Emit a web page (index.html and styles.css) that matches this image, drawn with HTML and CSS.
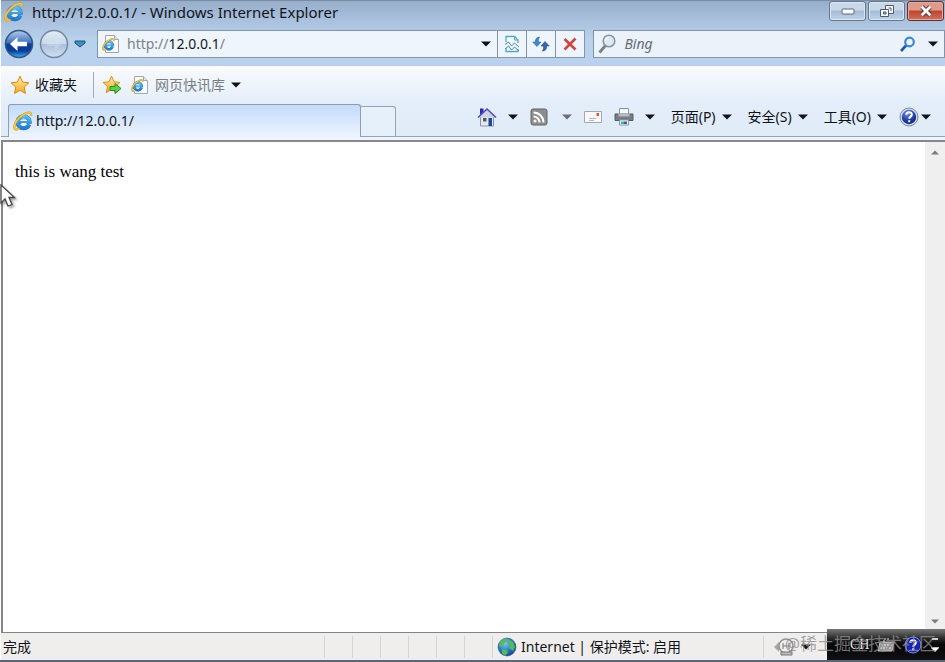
FILE: index.html
```html
<!DOCTYPE html>
<html lang="zh-CN">
<head>
<meta charset="utf-8">
<title>http://12.0.0.1/ - Windows Internet Explorer</title>
<link rel="stylesheet" href="styles.css">
</head>
<body>
<svg class="defs" aria-hidden="true">
  <defs>
    <linearGradient id="g-blue" x1="0" y1="0" x2="0" y2="1"><stop offset="0" stop-color="#55bdf3"/><stop offset="1" stop-color="#1f7bd2"/></linearGradient>
    <linearGradient id="g-star" x1="0" y1="0" x2="0" y2="1"><stop offset="0" stop-color="#fff2a0"/><stop offset="1" stop-color="#f9a51c"/></linearGradient>
    <linearGradient id="g-back" x1="0" y1="0" x2="0" y2="1"><stop offset="0" stop-color="#b4cdee"/><stop offset=".45" stop-color="#3f73bd"/><stop offset=".5" stop-color="#0d3f97"/><stop offset=".75" stop-color="#0b3b9c"/><stop offset="1" stop-color="#35b5f2"/></linearGradient>
    <linearGradient id="g-fwd" x1="0" y1="0" x2="0" y2="1"><stop offset="0" stop-color="#e3ecf6"/><stop offset=".48" stop-color="#cbd9e9"/><stop offset=".52" stop-color="#aabfd8"/><stop offset="1" stop-color="#d3e2f2"/></linearGradient>
    <radialGradient id="g-globe" cx=".4" cy=".3" r=".8"><stop offset="0" stop-color="#83c8f5"/><stop offset=".6" stop-color="#216bc2"/><stop offset="1" stop-color="#123a7b"/></radialGradient>
    <radialGradient id="g-help" cx=".4" cy=".25" r=".8"><stop offset="0" stop-color="#7593e0"/><stop offset=".6" stop-color="#1f40ae"/><stop offset="1" stop-color="#10206f"/></radialGradient>
  </defs>
  <symbol id="ie" viewBox="0 0 20 20">
    <circle cx="10.500" cy="10.500" r="4.500" fill="#e8f3fc"/>
    <path d="M16.200 13.500A6 6 0 1 1 16.600 10.800H6.500" fill="none" stroke="#2a6fb5" stroke-width="4"/>
    <path d="M16.200 13.500A6 6 0 1 1 16.600 10.800H6.500" fill="none" stroke="url(#g-blue)" stroke-width="3.400"/>
    <path d="M7.500 9.500h6.500M8.500 12.500h5" stroke="#e8f3fc" stroke-width="1.100"/>
    <path d="M18 4.500C18.500.8 15 1 11 3.200 5.500 6.300.8 12.500 1.300 16.500c.3 2.400 2.700 2.300 5 .8" fill="none" stroke="#c48a1c" stroke-width="2.200"/>
    <path d="M18 4.500C18.500.8 15 1 11 3.200 5.500 6.300.8 12.500 1.300 16.500c.3 2.400 2.700 2.300 5 .8" fill="none" stroke="#f9c936" stroke-width="1.600"/>
  </symbol>
  <symbol id="page-ie" viewBox="0 0 18 20">
    <path d="M3.500 1.500h9l4 4v13h-13z" fill="#fbfcfe" stroke="#a3a8b0"/>
    <path d="M12.500 1.500v4h4" fill="#e3e6eb" stroke="#a3a8b0"/>
    <use href="#ie" x="0" y="4" width="13" height="13"/>
  </symbol>
  <symbol id="down" viewBox="0 0 10 6"><path d="M0 .5h10L5 5.500z" fill="currentColor"/></symbol>
  <symbol id="star" viewBox="0 0 20 20"><path d="M10 1.200l2.600 5.900 6.300.7-4.700 4.300 1.300 6.400L10 15.300l-5.500 3.200 1.300-6.400L1.100 7.800l6.300-.7z" fill="url(#g-star)" stroke="#d98a1f" stroke-linejoin="round"/></symbol>
  <symbol id="help" viewBox="0 0 20 20"><circle cx="10" cy="10" r="9" fill="#d5dbe8" stroke="#7d8796"/><circle cx="10" cy="10" r="7.200" fill="url(#g-help)"/><path d="M7.300 7.800c0-3.600 5.600-3.400 5.600-.2 0 2-2.700 2-2.700 4.200M10.200 13.300v2" fill="none" stroke="#fff" stroke-width="2"/></symbol>
</svg>

<div class="window">
  <header class="frame">
    <div class="titlebar">
      <svg class="i20"><use href="#ie"/></svg>
      <h1>http://12.0.0.1/ - Windows Internet Explorer</h1>
      <div class="controls">
        <button class="ctl" aria-label="最小化"><svg width="14" height="8" viewBox="0 0 14 8"><rect x="1" y="2" width="12" height="5" rx="1" fill="#fff" stroke="#58677c"/></svg></button>
        <button class="ctl" aria-label="还原"><svg width="16" height="14" viewBox="0 0 16 14"><path d="M6.500 1.500h8v8h-8z" fill="#f4f7fb" stroke="#4f5d70"/><path d="M9.500 4h2.500v3" fill="none" stroke="#4f5d70"/><path d="M1.500 5.500h8v7h-8z" fill="#f4f7fb" stroke="#4f5d70"/><path d="M4.500 8h2.500v2H4.500z" fill="#a8bdd5" stroke="#4f5d70"/></svg></button>
        <button class="ctl close" aria-label="关闭"><svg width="14" height="12" viewBox="0 0 14 12"><path d="M3 2l8 8M11 2l-8 8" stroke="#5b3337" stroke-width="4.600"/><path d="M2.700 1.700l8.600 8.600M11.300 1.700l-8.600 8.600" stroke="#fff" stroke-width="2.800"/></svg></button>
      </div>
    </div>
    <div class="navbar">
      <div class="travel">
        <button aria-label="后退"><svg width="30" height="30" viewBox="0 0 30 30"><circle cx="15" cy="15" r="13.500" fill="url(#g-back)" stroke="#36547f" stroke-width="1.500"/><path d="M6 15l7.500-7v4.800H23v4.400h-9.500V22z" fill="#fff"/></svg></button>
        <button aria-label="前进"><svg width="30" height="30" viewBox="0 0 30 30"><circle cx="15" cy="15" r="13.500" fill="url(#g-fwd)" stroke="#7387a1" stroke-width="1.500"/><path d="M8 13h8V9l7 6-7 6v-4H8z" fill="#dce7f3" opacity=".35"/></svg></button>
        <button aria-label="最近的页面"><svg width="12" height="8" viewBox="0 0 12 8"><path d="M1 1h10v2L6 7 1 3z" fill="#3f8fc6" stroke="#1f4e7d"/></svg></button>
      </div>
      <div class="address">
        <div class="field">
          <svg class="page"><use href="#page-ie"/></svg>
          <div class="url" role="textbox" aria-label="地址" contenteditable="true" spellcheck="false">http://<b>12.0.0.1</b>/</div>
          <button aria-label="显示地址列表"><svg class="arrow"><use href="#down"/></svg></button>
        </div>
        <button class="cell" aria-label="兼容性视图"><svg width="16" height="18" viewBox="0 0 16 18"><path d="M2 7V1.500h8.500L14 5v3M2 13v3.500h12V14" fill="#f4fbff" stroke="#4dabc9" stroke-width="1.300"/><path d="M10.500 1.500V5H14" fill="none" stroke="#4dabc9"/><path d="M1 9.500l3.500-2.500 3 4 3-3L15 12M1 14l3.500-3 3 4 3-3 4.500 4" fill="none" stroke="#4a87c3" stroke-width="1"/></svg></button>
        <button class="cell" aria-label="刷新"><svg width="18" height="16" viewBox="0 0 18 16"><path d="M7.500 1C4.500 1 3.300 3 3.400 6H.8L5 10.500 9 6H6.500c-.2-2 0-3 1-5z" fill="#4187d2" stroke="#2b67ae" stroke-width=".6"/><path d="M10.500 15c3 0 4.200-2 4.100-5h2.600L13 5.500 9 10h2.500c.2 2 0 3-1 5z" fill="#3467b2" stroke="#214a91" stroke-width=".6"/></svg></button>
        <button class="cell" aria-label="停止"><svg width="14" height="14" viewBox="0 0 14 14"><path d="M1.500 2l11 10.500M12.500 1.500L1.500 12.500" stroke="#cf443e" stroke-width="2.600"/></svg></button>
      </div>
      <form class="search">
        <svg width="18" height="20" viewBox="0 0 18 20"><path d="M1.500 18.500l6-7" stroke="#777f89" stroke-width="2.800"/><circle cx="11" cy="7" r="5.800" fill="#d9e9f8" stroke="#8b95a3" stroke-width="1.600"/><path d="M7.500 6.500c.3-2 1.500-3 3.500-3" fill="none" stroke="#fff" stroke-width="1.500"/></svg>
        <input type="text" aria-label="搜索" placeholder="Bing">
        <button type="button" aria-label="搜索"><svg width="16" height="16" viewBox="0 0 16 16"><path d="M1 15l5.500-6" stroke="#2457a5" stroke-width="2.600"/><circle cx="9.500" cy="6" r="4.300" fill="#eaf4ff" stroke="#3c86d8" stroke-width="2.200"/></svg></button>
        <button type="button" aria-label="搜索选项"><svg class="arrow"><use href="#down"/></svg></button>
      </form>
    </div>
  </header>

  <div class="bars">
    <nav class="favorites" aria-label="收藏夹栏">
      <button class="fav"><svg class="i20"><use href="#star"/></svg>收藏夹</button>
      <button aria-label="添加到收藏夹栏" class="addfav"><svg width="20" height="20" viewBox="0 0 20 20"><use href="#star" width="19" height="19"/><path d="M8 11.500h5V8.500l6 5-6 5v-3H8z" fill="#5fcf45" stroke="#2a8b25"/></svg></button>
      <button class="slices"><svg class="page"><use href="#page-ie"/></svg><span>网页快讯库</span><svg class="arrow"><use href="#down"/></svg></button>
    </nav>
    <div class="tabrow">
      <button class="tab"><svg class="i20"><use href="#ie"/></svg>http://12.0.0.1/</button>
      <button class="newtab" aria-label="新选项卡"></button>
      <div class="commands">
        <button aria-label="主页"><svg class="i20" viewBox="0 0 20 20"><path d="M3.500 9h13v10h-13z" fill="#e7eaf0" stroke="#8c94a2"/><path d="M3 1.500h3.500V5L3 8z" fill="#2a2bb6"/><path d="M1 10.500l9-8.500 9 8.500" fill="#cfd3df" stroke="#4a4cc4" stroke-width="1.600"/><path d="M6 11h3.500v3.500H6z" fill="#535a61"/><path d="M11.500 11H15v8h-3.500z" fill="#1b4a9a"/></svg><svg class="arrow"><use href="#down"/></svg></button>
        <button aria-label="源" class="feed"><svg width="18" height="18" viewBox="0 0 18 18"><rect x="1" y="1" width="16" height="16" rx="2" fill="#8d8d8d" stroke="#676767"/><circle cx="5" cy="13" r="1.600" fill="#fff"/><path d="M3.500 8.500a6 6 0 0 1 6 6M3.500 4.500a10 10 0 0 1 10 10" fill="none" stroke="#fff" stroke-width="2"/></svg><svg class="arrow"><use href="#down"/></svg></button>
        <button aria-label="阅读邮件"><svg width="18" height="14" viewBox="0 0 18 14"><path d="M.5 1.500h17v11H.5z" fill="#fbf9f8" stroke="#a5a5ad"/><path d="M12.500 3H15v3h-2.500z" fill="#dc5642"/><path d="M5 8.500h7M5 10.500h5" stroke="#b9b9bd"/></svg></button>
        <button aria-label="打印"><svg class="i20" viewBox="0 0 20 20"><path d="M5.500 1.500h9v7h-9z" fill="#f8f9fb" stroke="#8b929d"/><path d="M1 7h18v6.500H1z" fill="#777c83" stroke="#565b62"/><path d="M4.500 6.500h11v3h-11z" fill="#b6bbc1"/><path d="M5.500 13h9v5h-9z" fill="#fff" stroke="#8b929d"/><path d="M7 14.500h3V17H7z" fill="#2ab5c4"/><path d="M10 14.500h3V17h-3z" fill="#345fa6"/></svg><svg class="arrow"><use href="#down"/></svg></button>
        <button class="menu">页面(P)<svg class="arrow"><use href="#down"/></svg></button>
        <button class="menu">安全(S)<svg class="arrow"><use href="#down"/></svg></button>
        <button class="menu">工具(O)<svg class="arrow"><use href="#down"/></svg></button>
        <button aria-label="帮助" class="helpbtn"><svg class="i20"><use href="#help"/></svg><svg class="arrow"><use href="#down"/></svg></button>
      </div>
    </div>
  </div>

  <div class="view">
    <main>this is wang test</main>
    <div class="scrollbar"><svg class="up"><use href="#down"/></svg><svg><use href="#down"/></svg></div>
    <svg class="cursor" width="18" height="26" viewBox="0 0 18 26"><path d="M1 1v18l4-4 3 7 4-1.500-3-7h5.500z" fill="#fff" stroke="#454545" stroke-width="1.300"/></svg>
  </div>

  <footer class="status">
    <span class="done">完成</span>
    <i></i><i></i><i></i><i></i><i></i><i></i>
    <span class="zone"><svg class="i20" viewBox="0 0 20 20"><circle cx="10" cy="10" r="9" fill="url(#g-globe)" stroke="#34577d" stroke-width=".6"/><path d="M3 5c2-3 5-3.500 7-3L9 5 6.500 7 6 10 2 9zM12 3l4 2 2 5-2 4-4-3 1-3-3-2zM5 12l5 1 1 3-3 2.500-3-2z" fill="#4fbd59"/></svg>Internet | 保护模式: 启用</span>
    <span class="extra"><svg width="22" height="20" viewBox="0 0 22 20"><path d="M1 10l5-5v10z" fill="#a9a9a9"/><circle cx="13" cy="9" r="7" fill="#eee" stroke="#929292" stroke-width="1.500"/><path d="M10 6v6M16 6v6M10 9h6M8 15h11v3H8z" fill="#bbb" stroke="#777"/></svg><svg class="arrow"><use href="#down"/></svg></span>
    <div class="langbar">
      <span>CH</span>
      <svg width="18" height="14" viewBox="0 0 18 14"><path d="M3 4h14l-2 9H1z" fill="#999" stroke="#c9c9c9"/><path d="M4 7h11M3 10h11M7 4V1h6" fill="none" stroke="#eee" stroke-dasharray="2 1"/></svg>
      <svg class="i20" viewBox="0 0 20 20"><circle cx="10" cy="10" r="8" fill="#1622b5" stroke="#7b87e6"/><path d="M7.300 7.800c0-3.600 5.600-3.400 5.600-.2 0 2-2.700 2-2.700 4.200M10.200 13.300v2" fill="none" stroke="#fff" stroke-width="2"/></svg>
      <svg width="8" height="16" viewBox="0 0 8 16"><path d="M1 2h6M1 11h6l-3 3z" fill="#fff" stroke="#fff" stroke-width="1.500"/></svg>
    </div>
    <div class="watermark">@稀土掘金技术社区</div>
  </footer>
</div>
</body>
</html>
```

FILE: styles.css
```css
* { box-sizing: border-box; }
body {
  margin: 0;
  color: #10141a;
  font: 14px/20px "Noto Sans", "Noto Sans CJK SC", sans-serif;
}
button, input { margin: 0; padding: 0; border: 0; background: none; color: inherit; font: inherit; }
button { display: flex; align-items: center; }
svg { display: block; flex: none; }
.defs { position: absolute; width: 0; height: 0; }
.i20 { width: 20px; height: 20px; }
.page { width: 18px; height: 20px; }
.arrow { width: 10px; height: 6px; }

.window { display: flex; flex-direction: column; min-height: 100vh; padding-left: 1px; border-bottom: 2px solid #59677d; }
.frame { background: linear-gradient(#97aeca, #a9c1dc 30%, #b9d2ec 60%, #b9d1ed); border-top: 1px solid #7b8ca3; }
.titlebar { display: flex; align-items: center; gap: 8px; height: 21px; padding-left: 3px; }
h1 { flex: 1; margin: 0; font-size: 15px; font-weight: 400; line-height: 20px; }
.controls { display: flex; gap: 2px; align-self: flex-start; padding-right: 1px; }
.ctl {
  justify-content: center;
  width: 37px;
  height: 20px;
  border: 1px solid #65788f;
  border-radius: 3px;
  background: linear-gradient(#c8d8e9 45%, #a5bcd5 50%, #bfd3e8);
  box-shadow: inset 0 0 0 1px #dbe6f2;
}
.close { border-color: #5b2f35; background: linear-gradient(#dd9b8c 45%, #bd4431 50%, #d1705a); box-shadow: inset 0 0 0 1px #e5ab9d; }

.navbar { display: flex; align-items: center; height: 44px; gap: 8px; }
.travel { display: flex; align-items: center; gap: 5px; width: 88px; padding-left: 3px; }
.address { display: flex; flex: 487 1 0; height: 28px; border: 1px solid #8394a9; background: #eff5fc; }
.field { display: flex; flex: 1; align-items: center; gap: 7px; padding: 0 6px 0 4px; }
.url { flex: 1; color: #7d8289; outline: 0; }
.url b { color: #15191f; font-weight: 400; }
.cell { justify-content: center; width: 29px; border-left: 1px solid #8394a9; }
.search { display: flex; flex: 340 1 0; align-items: center; gap: 8px; min-width: 0; height: 28px; padding: 0 6px 0 4px; border: 1px solid #8394a9; background: #ebf2fa; }
.search input { flex: 1; min-width: 0; outline: 0; }
.search input::placeholder { color: #686d73; font-style: italic; opacity: 1; }
.search button + button { margin-left: 4px; }

.bars { background: linear-gradient(#f9fbfe, #e4eefa 50%, #dfebf8); border-bottom: 3px solid #edf4fc; }
.favorites { display: flex; align-items: center; height: 38px; padding-left: 9px; }
.favorites button { height: 26px; }
.fav { gap: 5px; padding-right: 16px; border-right: 1px solid #a1a9b5; }
.favorites .addfav { margin: 0 9px 0 8px; }
.slices { gap: 6px; }
.slices span { color: #777d86; }
.tabrow { display: flex; height: 33px; border-bottom: 1px solid #98a3b1; }
.tab {
  flex: 0 1 353px;
  gap: 3px;
  height: 33px;
  margin-left: 7px;
  padding-left: 4px;
  border: 1px solid #8f9cac;
  border-bottom: 0;
  border-radius: 3px 3px 0 0;
  background: linear-gradient(#c3dbfb, #edf4fd);
}
.newtab { width: 35px; margin-top: 2px; border: 1px solid #98a3b1; border-width: 1px 1px 0 0; border-radius: 0 3px 0 0; background: #e6f0fb; }
.commands { display: flex; align-items: center; gap: 12px; margin-left: auto; padding: 0 14px 6px 0; }
.commands button { gap: 11px; }
.commands .feed { gap: 14px; }
.feed .arrow { color: #697079; }
.commands .menu { gap: 6px; margin-left: 4px; }
.commands .helpbtn { gap: 2px; }

.view { position: relative; display: flex; flex: 1; border: 2px solid #85878b; border-width: 2px 0 0 2px; background: #fff; }
main { flex: 1; padding: 20px 12px; font: 17px/20px "Liberation Serif", serif; color: #000; }
.scrollbar { display: flex; flex-direction: column; justify-content: space-between; align-items: center; width: 20px; padding: 8px 0; background: #efeff0; color: #797d82; }
.scrollbar svg { width: 8px; height: 5px; }
.scrollbar .up { transform: rotate(180deg); }
.cursor { position: absolute; left: -3px; top: 42px; filter: drop-shadow(2px 2px 1px #0005); }

.status { position: relative; display: flex; align-items: center; height: 28px; border-top: 1px solid #828487; background: #f0eeed; }
.done { flex: 1; padding-left: 2px; }
.status i, .zone, .extra { height: 22px; border-left: 1px solid #d6d4d3; }
.status i { width: 28px; }
.zone { display: flex; align-items: center; gap: 4px; width: 271px; padding-left: 4px; }
.extra { display: flex; align-items: center; gap: 6px; width: 182px; padding-left: 9px; }
.langbar {
  position: absolute;
  right: 0;
  bottom: 0;
  display: flex;
  align-items: center;
  gap: 8px;
  width: 118px;
  height: 31px;
  padding-left: 23px;
  background: linear-gradient(#777, #2b2b2b 30%, #050505 50%, #111);
  color: #e8e8e8;
  font: 14px/20px "Liberation Serif", serif;
}
.watermark { position: absolute; right: 9px; bottom: 4px; color: #8d8d8dcc; font-size: 17px; line-height: 24px; }
```
